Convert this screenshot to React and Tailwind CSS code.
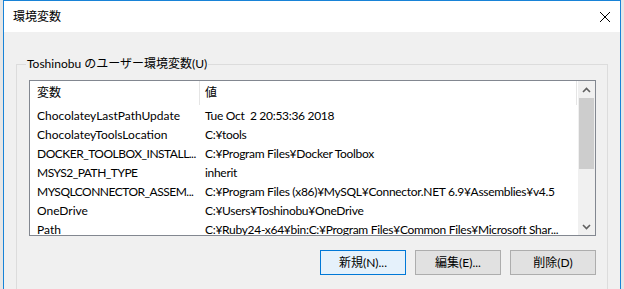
import React from "react";

const rows = [
  ["ChocolateyLastPathUpdate", "Tue Oct  2 20:53:36 2018", false],
  ["ChocolateyToolsLocation", "C:¥tools", false],
  ["DOCKER_TOOLBOX_INSTALL...", "C:¥Program Files¥Docker Toolbox", true],
  ["MSYS2_PATH_TYPE", "inherit", true],
  ["MYSQLCONNECTOR_ASSEM...", "C:¥Program Files (x86)¥MySQL¥Connector.NET 6.9¥Assemblies¥v4.5", true],
  ["OneDrive", "C:¥Users¥Toshinobu¥OneDrive", false],
  ["Path", "C:¥Ruby24-x64¥bin:C:¥Program Files¥Common Files¥Microsoft Shar...", false],
];

const font = { fontFamily: 'Lato, "Noto Sans CJK JP", sans-serif' };

function Btn({ children, primary }) {
  return (
    <div
      className={
        "w-[86px] h-[25px] flex items-center justify-center text-[12px] text-black border " +
        (primary ? "border-[#0078d7] bg-[#e5f1fb]" : "border-[#adadad] bg-[#e1e1e1]")
      }
    >
      {children}
    </div>
  );
}

export default function App() {
  return (
    <div className="w-[624px] h-[289px] overflow-hidden bg-[#e6e6e6] pl-[3px]" style={font}>
      <div className="w-[618px] h-[300px] border border-[#1883d7] flex flex-col bg-[#f0f0f0]">
        <div className="h-[31px] bg-white flex items-center justify-between pl-[9px] pr-[8px] shrink-0">
          <span className="text-[12px] text-black">環境変数</span>
          <svg width="12" height="12" viewBox="0 0 12 12" className="mr-[1px]">
            <path d="M1 1 L11 11 M11 1 L1 11" stroke="#000" strokeWidth="1" fill="none" />
          </svg>
        </div>
        <div className="mt-[32px] mx-[12px] h-[240px] border border-[#dcdcdc] relative pt-[15px] pl-[12px] pr-[11px]">
          <div className="absolute left-[9px] top-[-9px] px-[1px] bg-[#f0f0f0] text-[12px] leading-[16px] text-black">
            Toshinobu のユーザー環境変数(U)
          </div>
          <div className="h-[156px] border border-[#828790] bg-white flex">
            <div className="w-[548px] shrink-0 flex flex-col overflow-hidden">
              <div className="h-[25px] shrink-0 flex text-[12px] text-black">
                <div className="w-[170px] shrink-0 pl-[7px] flex items-center border-r border-[#e5e5e5] h-[24px]">変数</div>
                <div className="w-[377px] shrink-0 pl-[5px] flex items-center border-r border-[#e5e5e5] h-[24px]">値</div>
              </div>
              {rows.map(([k, v, caps]) => (
                <div key={k} className="h-[19px] shrink-0 flex items-center text-[12px] text-black">
                  <div
                    className={
                      "w-[170px] shrink-0 pl-[7px] overflow-hidden whitespace-pre " +
                      (caps ? "tracking-[-0.5px]" : "")
                    }
                  >
                    {k}
                  </div>
                  <div className="w-[377px] shrink-0 pl-[5px] overflow-hidden whitespace-pre tracking-[-0.3px]">{v}</div>
                </div>
              ))}
            </div>
            <div className="w-[17px] bg-[#f0f0f0] flex flex-col shrink-0">
              <div className="h-[17px] flex items-center justify-center">
                <svg width="9" height="6" viewBox="0 0 9 6">
                  <path d="M1 5 L4.5 1.5 L8 5" stroke="#606060" strokeWidth="1.6" fill="none" />
                </svg>
              </div>
              <div className="h-[71px] mx-[1px] bg-[#cdcdcd]" />
              <div className="flex-1" />
              <div className="h-[17px] flex items-center justify-center">
                <svg width="9" height="6" viewBox="0 0 9 6">
                  <path d="M1 1 L4.5 4.5 L8 1" stroke="#606060" strokeWidth="1.6" fill="none" />
                </svg>
              </div>
            </div>
          </div>
          <div className="flex justify-end gap-[9px] mt-[14px]">
            <Btn primary>新規(N)...</Btn>
            <Btn>編集(E)...</Btn>
            <Btn>削除(D)</Btn>
          </div>
        </div>
      </div>
    </div>
  );
}
